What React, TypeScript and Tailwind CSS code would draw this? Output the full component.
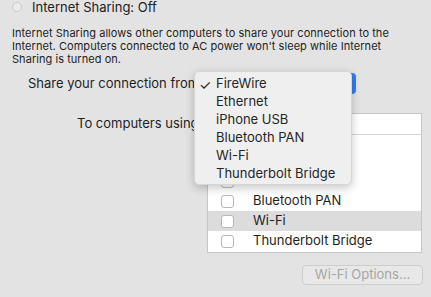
import React from 'react';

const ports = ['Ethernet', 'iPhone USB', 'Bluetooth PAN', 'Wi-Fi', 'Thunderbolt Bridge'];
const menuItems = ['FireWire', 'Ethernet', 'iPhone USB', 'Bluetooth PAN', 'Wi-Fi', 'Thunderbolt Bridge'];

const App: React.FC = () => {
  return (
    <div
      className="relative w-[431px] h-[297px] overflow-hidden bg-[#e3e3e3] text-[#1e1e1e]"
      style={{ fontFamily: 'Inter, "Liberation Sans", sans-serif' }}
    >
      {/* header */}
      <div className="flex items-center h-[13px] pl-[12px]">
        <div className="w-[10px] h-[10px] rounded-full border border-[#c9c9c9] bg-[#ececec]" />
        <span className="ml-[10px] text-[13px] leading-[16px] whitespace-nowrap text-[#222]">Internet Sharing: Off</span>
      </div>

      <p className="mt-[14px] pl-[12px] pr-[30px] text-[11px] leading-[13px] tracking-[0.05px]">
        Internet Sharing allows other computers to share your connection to the Internet. Computers connected to AC power won't sleep while Internet Sharing is turned on.
      </p>

      {/* share from */}
      <div className="mt-[7px] flex items-center h-[21px]">
        <span className="pl-[28px] w-[194px] whitespace-nowrap overflow-hidden text-[13px]">Share your connection from</span>
        <div className="w-[162px] h-[21px] rounded-[4px] bg-[#2f7cf6]" />
      </div>

      {/* to computers using */}
      <div className="mt-[19px] flex items-start">
        <span className="pl-[77px] w-[207px] mt-[1px] whitespace-nowrap overflow-hidden text-[13px] leading-[18px]">To computers using</span>
        <div className="w-[215px] h-[140px] border border-[#c6c6c6] bg-white flex flex-col">
          <div className="h-[21px] border-b border-[#d4d4d4]" />
          <div className="h-[16px]" />
          {ports.map((p) => (
            <div key={p} className={`flex items-center h-[20px] ${p === 'Wi-Fi' ? 'bg-[#dcdcdc]' : ''}`}>
              <div className="ml-[13px] w-[13px] h-[13px] rounded-[3px] border border-[#b7b7b7] bg-white" />
              <span className="ml-[19px] text-[13px]">{p}</span>
            </div>
          ))}
        </div>
      </div>

      <div className="mt-[12px] flex justify-end pr-[8px]">
        <div className="w-[121px] h-[20px] rounded-[4px] border border-[#cdcdcd] bg-[#e8e8e8] flex items-center justify-center text-[13px] text-[#a6a6a6]">
          Wi-Fi Options...
        </div>
      </div>

      {/* popup menu */}
      <div className="absolute left-[194px] top-[71px] w-[158px] h-[114px] rounded-[5px] bg-[#efefef] border border-[#d6d6d6] shadow-[0_3px_10px_rgba(0,0,0,0.22)] pt-[3px]">
        {menuItems.map((m, i) => (
          <div key={m} className="flex items-center h-[18px] text-[13px] text-[#262626]">
            <span className="w-[21px] pl-[4px] text-[14px]">{i === 0 ? '✓' : ''}</span>
            <span>{m}</span>
          </div>
        ))}
      </div>
    </div>
  );
};

export default App;
